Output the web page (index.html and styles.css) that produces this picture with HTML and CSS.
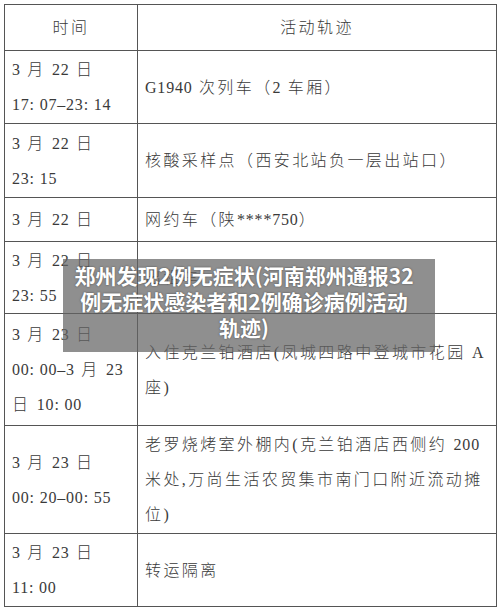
FILE: index.html
```html
<!DOCTYPE html>
<html lang="zh-CN">
<head>
<meta charset="utf-8">
<title>活动轨迹</title>
<link rel="stylesheet" href="styles.css">
</head>
<body>
<div class="page">
  <table class="trace">
    <colgroup><col class="c-time"><col class="c-act"></colgroup>
    <tr class="r-head">
      <th>时间</th>
      <th>活动轨迹</th>
    </tr>
    <tr class="r2">
      <td><span class="n">3</span> 月 <span class="n">22</span> 日<br><span class="n">17: 07–23: 14</span></td>
      <td><span class="n">G1940</span> 次列车（<span class="n">2</span> 车厢）</td>
    </tr>
    <tr class="r3">
      <td><span class="n">3</span> 月 <span class="n">22</span> 日<br><span class="n">23: 15</span></td>
      <td>核酸采样点（西安北站负一层出站口）</td>
    </tr>
    <tr class="r4">
      <td><span class="n">3</span> 月 <span class="n">22</span> 日</td>
      <td>网约车（陕<span class="n">****750</span>）</td>
    </tr>
    <tr class="r5">
      <td><span class="n">3</span> 月 <span class="n">22</span> 日<br><span class="n">23: 55</span></td>
      <td>出租车</td>
    </tr>
    <tr class="r6">
      <td><span class="n">3</span> 月 <span class="n">23</span> 日<br><span class="n">00: 00–3</span> 月 <span class="n">23</span><br>日 <span class="n">10: 00</span></td>
      <td>入住克兰铂酒店(凤城四路中登城市花园 A<br>座)</td>
    </tr>
    <tr class="r7">
      <td><span class="n">3</span> 月 <span class="n">23</span> 日<br><span class="n">00: 20–00: 55</span></td>
      <td>老罗烧烤室外棚内(克兰铂酒店西侧约 <span class="n">200</span><br>米处,万尚生活农贸集市南门口附近流动摊<br>位)</td>
    </tr>
    <tr class="r8">
      <td><span class="n">3</span> 月 <span class="n">23</span> 日<br><span class="n">11: 00</span></td>
      <td>转运隔离</td>
    </tr>
  </table>
  <div class="caption">郑州发现2例无症状(河南郑州通报32<br>例无症状感染者和2例确诊病例活动<br>轨迹)</div>
</div>
</body>
</html>
```
FILE: styles.css
```css
html, body {
  margin: 0;
  padding: 0;
  background: #ffffff;
}

.page {
  position: relative;
  width: 500px;
  height: 612px;
  overflow: hidden;
  padding: 4px 0 0 4px;
  box-sizing: border-box;
}

.trace {
  border-collapse: collapse;
  table-layout: fixed;
  width: 492px;
  font-family: "Liberation Serif", "Noto Sans CJK SC", serif;
  font-weight: 300;
  font-size: 16px;
  line-height: 35px;
  letter-spacing: 2.4px;
  color: #3a3a3a;
}

.n {
  letter-spacing: 0.8px;
}

.c-time { width: 133px; }
.c-act { width: 359px; }

.trace th,
.trace td {
  border: 1.5px solid #555555;
  padding: 0 0 0 7px;
  vertical-align: middle;
  text-align: left;
  font-weight: 300;
  white-space: nowrap;
  overflow: hidden;
}

.trace th {
  text-align: center;
  padding: 0;
}

.r-head { height: 46px; }
.r2 { height: 73px; }
.r3 { height: 74px; }
.r4 { height: 44px; }
.r5 { height: 72px; }
.r6 { height: 112px; }
.r7 { height: 108px; }
.r8 { height: 73px; }

.caption {
  position: absolute;
  left: 63px;
  top: 259px;
  width: 372px;
  height: 93px;
  box-sizing: border-box;
  padding: 3px 12px 0 2px;
  background: rgba(100, 100, 100, 0.72);
  color: #ffffff;
  font-family: "Noto Sans CJK SC", "Noto Sans", sans-serif;
  font-weight: 700;
  font-size: 21px;
  line-height: 26px;
  text-align: center;
  text-shadow: 0 0 2px rgba(0, 0, 0, 0.5);
}
```
